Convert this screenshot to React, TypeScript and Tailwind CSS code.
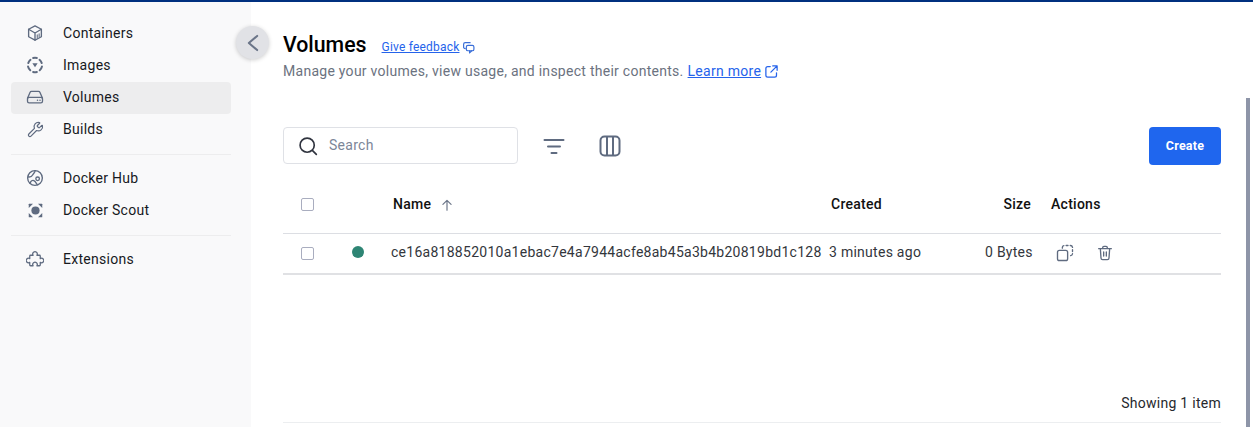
import React from "react";
import { Wrench } from "lucide-react";

const stroke = "#5f6b80";

function Ico({ children, size = 17, color = stroke, sw = 1.7 }: { children: React.ReactNode; size?: number; color?: string; sw?: number }) {
  return (
    <svg width={size} height={size} viewBox="0 0 24 24" fill="none" stroke={color} strokeWidth={sw} strokeLinecap="round" strokeLinejoin="round" className="shrink-0">
      {children}
    </svg>
  );
}

const IContainers = () => (
  <Ico size={18} sw={1.800}>
    <path d="M12 2.500 20.500 7v10L12 21.500 3.500 17V7Z" />
    <path d="M3.500 7 12 12l8.500-5M12 12v9.500" />
    <path d="M15 14.500v3.500M17.500 13v3.500" strokeWidth={1.400} />
  </Ico>
);
const IImages = () => (
  <Ico size={18}>
    <path d="M9.500 2.700a9.500 9.500 0 0 1 5 0M18 5a9.500 9.500 0 0 1 3 4.500M21.300 14a9.500 9.500 0 0 1-3 5M14.500 21.300a9.500 9.500 0 0 1-5 0M5.700 19a9.500 9.500 0 0 1-3-5M3 9.500A9.500 9.500 0 0 1 6 5" strokeWidth={2.600} />
    <path d="M8.500 9.800h7L12 15Z" fill={stroke} stroke="none" />
  </Ico>
);
const IVolumes = () => (
  <Ico size={20} sw={1.600}>
    <path d="M3 13.500 6 6.500a2 2 0 0 1 1.800-1.200h8.400A2 2 0 0 1 18 6.500l3 7" />
    <rect x="3" y="12.500" width="18" height="6.500" rx="2" />
    <path d="M15 15.800h.01M18 15.800h.01" strokeWidth={1.800} />
  </Ico>
);
const IHub = () => (
  <Ico size={18} sw={1.800}>
    <circle cx="12" cy="12" r="9.800" />
    <path d="M2.800 10.500c3 .5 5-.5 6-2.500s3-3 3.500-5.800" />
    <path d="M5.500 19c1-3 3-4.500 5-3.500s3 3 4.500 5.500" />
    <circle cx="15.500" cy="13" r="2.400" />
  </Ico>
);
const IScout = () => (
  <svg width="17" height="17" viewBox="0 0 24 24" fill={stroke} className="shrink-0">
    <circle cx="12" cy="12" r="5.800" />
    <path d="M3 2.500h5.500L2.500 8.500V3a.5.500 0 0 1 .5-.5Z" />
    <path d="M21 2.500h-5.500l6 6V3a.5.500 0 0 0-.5-.5Z" />
    <path d="M3 21.500h5.500l-6-6V21a.5.500 0 0 0 .5.5Z" />
    <path d="M21 21.500h-5.500l6-6V21a.5.500 0 0 1-.5.5Z" />
  </svg>
);
const IExtensions = () => (
  <Ico size={18} sw={1.700}>
    <path d="M6 7h3.500a3 3 0 1 1 5 0H18a1 1 0 0 1 1 1v3.500a3 3 0 1 1 0 5V20a1 1 0 0 1-1 1h-3.500a3 3 0 1 0-5 0H6a1 1 0 0 1-1-1v-3.500a3 3 0 1 1 0-5V8a1 1 0 0 1 1-1Z" />
  </Ico>
);

function NavItem({ icon, label, active }: { icon: React.ReactNode; label: string; active?: boolean }) {
  return (
    <div className={`flex h-8 items-center rounded pb-[2px] ${active ? "bg-[#ededee]" : ""}`}>
      <div className="flex w-[48px] justify-center">{icon}</div>
      <span className="ml-[4px] text-[14px] tracking-[0.27px] text-[#17191e]">{label}</span>
    </div>
  );
}

function Checkbox() {
  return <div className="h-[13px] w-[13px] rounded-[2px] border-[1.5px] border-[#a9adbf] bg-white" />;
}

export default function App() {
  return (
    <div className="relative flex h-[427px] w-[1253px] flex-col overflow-hidden bg-white font-['Roboto',sans-serif]">
      <div className="h-[2px] shrink-0 bg-[#00307f]" />
      <div className="flex min-h-0 flex-1">
        <aside className="w-[251px] shrink-0 bg-[#f9f9fa] pr-[20px] pl-[11px] pt-[16px]">
          <NavItem icon={<IContainers />} label="Containers" />
          <NavItem icon={<IImages />} label="Images" />
          <NavItem icon={<IVolumes />} label="Volumes" active />
          <NavItem icon={<Wrench size={17} color={stroke} strokeWidth={1.700} />} label="Builds" />
          <div className="mt-2 mb-2 h-px bg-[#ededee]" />
          <NavItem icon={<IHub />} label="Docker Hub" />
          <NavItem icon={<IScout />} label="Docker Scout" />
          <div className="mt-2 mb-2 h-px bg-[#ededee]" />
          <NavItem icon={<IExtensions />} label="Extensions" />
        </aside>

        <main className="flex min-w-0 flex-1 flex-col pl-[32px] pr-[32px]">
          <div className="mt-[26px] flex h-[33px] items-center">
            <h1 className="text-[21.300px] leading-none font-medium text-black">Volumes</h1>
            <a className="mt-[5px] ml-[15px] text-[12px] tracking-[0.2px] text-[#2563eb] underline">Give feedback</a>
            <svg width="13" height="13" viewBox="0 0 24 24" fill="none" stroke="#3b6fd8" strokeWidth="2.200" strokeLinecap="round" strokeLinejoin="round" className="mt-[6px] ml-[3px]">
              <path d="M15 3H6a3 3 0 0 0-3 3v6a3 3 0 0 0 3 2" />
              <rect x="8" y="8" width="14" height="10" rx="3" />
              <path d="M14 18v4l4-4" />
            </svg>
          </div>
          <div className="flex h-[20px] items-center text-[14px] tracking-[0.27px] text-[#6b7280]">
            <span>Manage your volumes, view usage, and inspect their contents.</span>
            <a className="ml-[4px] text-[#2563eb] underline">Learn more</a>
            <svg width="15" height="15" viewBox="0 0 24 24" fill="none" stroke="#2563eb" strokeWidth="2" strokeLinecap="round" strokeLinejoin="round" className="ml-[3px]">
              <path d="M10 4H6a3 3 0 0 0-3 3v11a3 3 0 0 0 3 3h11a3 3 0 0 0 3-3v-4" />
              <path d="M14 3h7v7M21 3 11 13" />
            </svg>
          </div>

          <div className="mt-[46px] flex h-[38px] items-center">
            <div className="flex h-[37px] w-[235px] items-center self-start rounded border border-[#dfe1e6] pl-[14px]">
              <svg width="20" height="20" viewBox="0 0 24 24" fill="none" stroke="#30343f" strokeWidth="2" strokeLinecap="round">
                <circle cx="11" cy="11" r="8.500" />
                <path d="m17.500 17.500 4.500 4.500" />
              </svg>
              <span className="ml-[11px] text-[14px] tracking-[0.27px] text-[#7c8698]">Search</span>
            </div>
            <svg width="24" height="24" viewBox="0 0 24 24" fill="none" stroke="#5f6b80" strokeWidth="2" strokeLinecap="round" className="ml-[24px]">
              <path d="M2.500 6h19M6 12.500h12M9.500 19h5" />
            </svg>
            <svg width="24" height="24" viewBox="0 0 24 24" fill="none" stroke="#5f6b80" strokeWidth="2" className="ml-[32px]">
              <rect x="2.500" y="2.500" width="19" height="19" rx="4" />
              <path d="M9 2.500v19M15 2.500v19" />
            </svg>
            <button className="ml-auto h-[38px] w-[72px] rounded bg-[#1f66ee] text-[12.500px] font-bold tracking-[0.2px] text-white">Create</button>
          </div>

          <div className="mt-[15px] flex h-[54px] items-center border-b border-[#dcdee3] pb-[4px] text-[14px] font-medium tracking-[0.27px] text-[#111]">
            <div className="w-[110px] pl-[18px]"><Checkbox /></div>
            <div className="flex w-[438px] items-center">
              Name
              <svg width="14" height="14" viewBox="0 0 24 24" fill="none" stroke="#6b7588" strokeWidth="2" strokeLinecap="round" strokeLinejoin="round" className="mt-[1px] ml-[9px]">
                <path d="M12 21V4M5 11l7-7 7 7" />
              </svg>
            </div>
            <div className="w-[140px]">Created</div>
            <div className="w-[60px] text-right">Size</div>
            <div className="ml-[20px]">Actions</div>
          </div>

          <div className="flex h-[41px] items-center border-b-2 border-[#e0e1e4] pb-[2px] text-[14px] tracking-[0.27px] text-[#33363c]">
            <div className="mt-[2px] w-[69px] pl-[18px]"><Checkbox /></div>
            <div className="h-3 w-3 -translate-y-[1px] rounded-full bg-[#2e8574]" />
            <div className="ml-[27px] w-[438px] whitespace-nowrap">ce16a818852010a1ebac7e4a7944acfe8ab45a3b4b20819bd1c128</div>
            <div className="w-[154px] whitespace-nowrap">3 minutes ago</div>
            <div className="ml-[2px] whitespace-nowrap">0 Bytes</div>
            <svg width="18" height="18" viewBox="0 0 24 24" fill="none" stroke={stroke} strokeWidth="1.800" strokeLinecap="round" strokeLinejoin="round" className="ml-[23px]">
              <rect x="2" y="8.500" width="13.500" height="13.500" rx="2.500" />
              <path d="M8.500 5.500V4.500a2.500 2.500 0 0 1 2-2.300" />
              <path d="M13.500 2h2.500M19 2a3 3 0 0 1 3 2.500M22 7.500v2.500M22 13a3 3 0 0 1-2.500 2.500" />
            </svg>
            <svg width="16" height="16" viewBox="0 0 24 24" fill="none" stroke={stroke} strokeWidth="2" strokeLinecap="round" strokeLinejoin="round" className="ml-[23px]">
              <path d="M2.500 5.500h19M8.500 5.500V4a2 2 0 0 1 2-2h3a2 2 0 0 1 2 2v1.500M5 5.500l1 14a2.500 2.500 0 0 0 2.500 2.500h7a2.500 2.500 0 0 0 2.500-2.500l1-14M10 10.500v6M14 10.500v6" />
            </svg>
          </div>

          <div className="mt-auto flex h-[38px] items-center justify-end border-b border-[#eceef0] pb-[1px] text-[14px] tracking-[0.27px] text-[#26282d]">
            Showing 1 item
          </div>
          <div className="h-[4px] shrink-0" />
        </main>
      </div>

      <button className="absolute top-[26px] left-[236px] flex h-[33px] w-[33px] items-center justify-center rounded-full bg-[#e1e2e6] shadow-[0_1px_4px_rgba(0,0,0,0.2)]">
        <svg width="20" height="20" viewBox="0 0 24 24" fill="none" stroke="#6b7588" strokeWidth="2.400" strokeLinecap="round" strokeLinejoin="round">
          <path d="M17 3.500 7 12l10 8.500" />
        </svg>
      </button>
      <div className="absolute top-[98px] right-[3px] bottom-0 w-[4px] bg-[#8e95a8]" />
    </div>
  );
}
